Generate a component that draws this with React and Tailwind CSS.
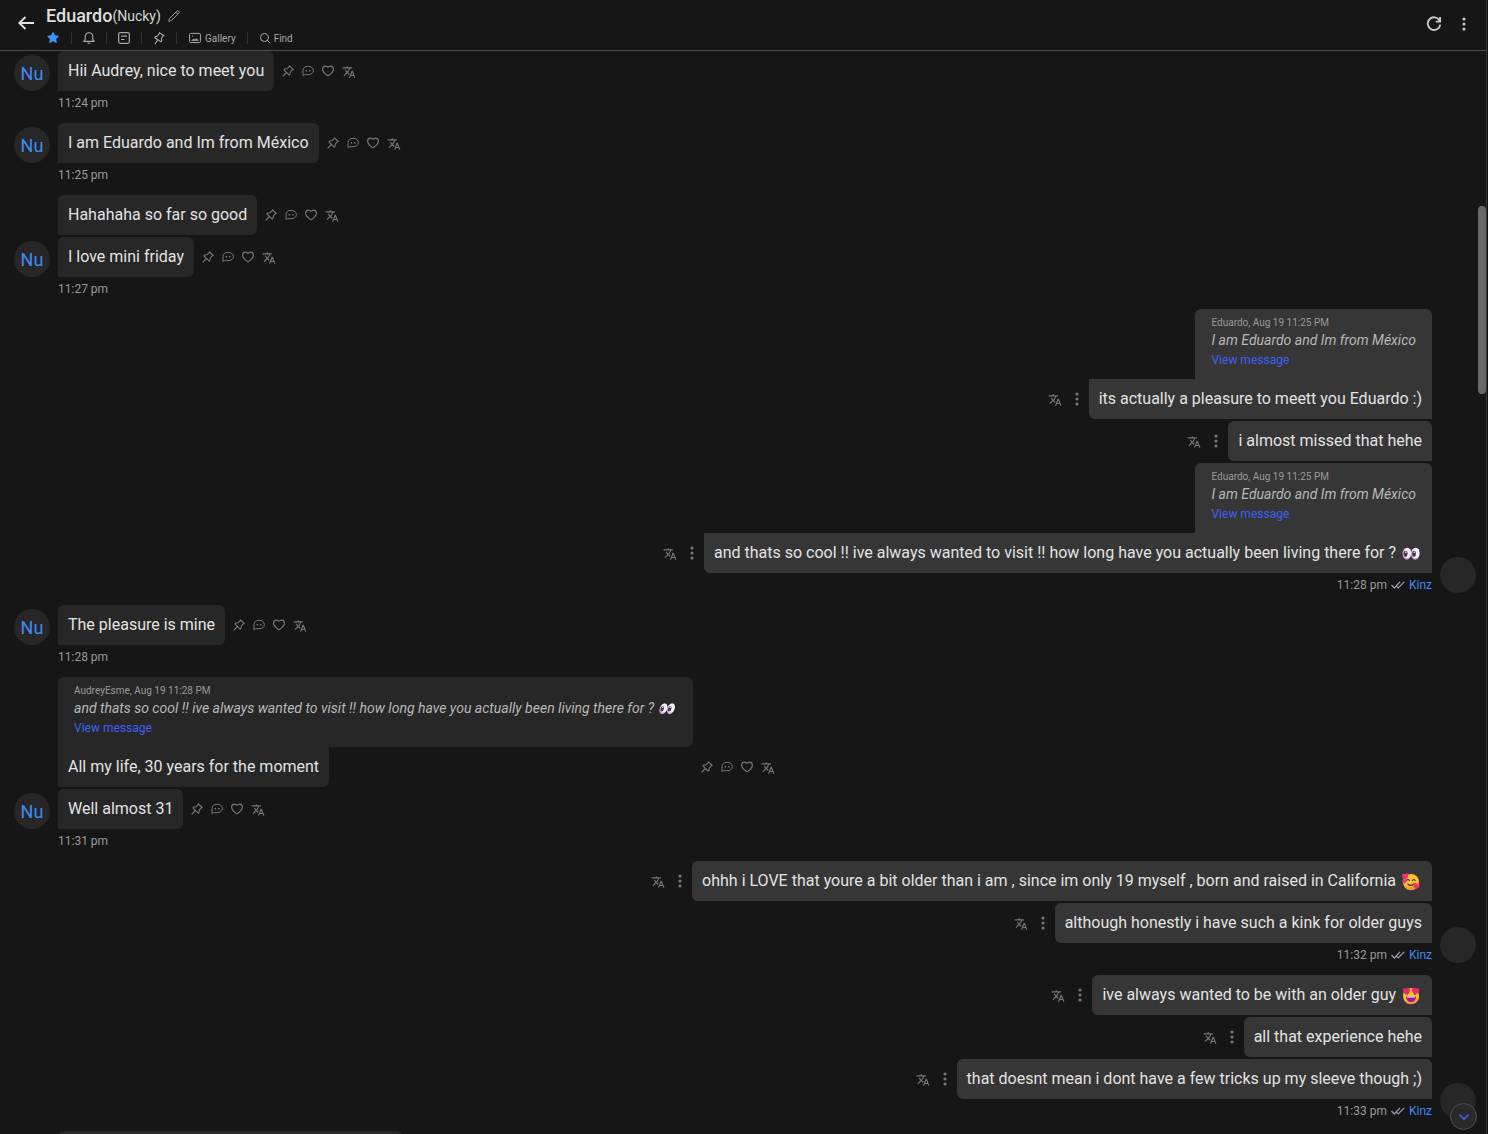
import { AiFillStar } from 'react-icons/ai'
import { MdTranslate } from 'react-icons/md'
import { ChevronDown, Search } from 'lucide-react'
import clsx from 'clsx'

const QUOTE_ME = {
  head: 'Eduardo, Aug 19 11:25 PM',
  text: 'I am Eduardo and Im from México',
}

// Each group shares one avatar and one timestamp
const GROUPS = [
  { from: 'them', time: '11:24 pm', messages: [{ text: 'Hii Audrey, nice to meet you' }] },
  { from: 'them', time: '11:25 pm', messages: [{ text: 'I am Eduardo and Im from México' }] },
  {
    from: 'them',
    time: '11:27 pm',
    messages: [{ text: 'Hahahaha so far so good' }, { text: 'I love mini friday' }],
  },
  {
    from: 'us',
    time: '11:28 pm',
    messages: [
      { quote: QUOTE_ME, text: 'its actually a pleasure to meett you Eduardo :)' },
      { text: 'i almost missed that hehe' },
      {
        quote: QUOTE_ME,
        text: 'and thats so cool !! ive always wanted to visit !! how long have you actually been living there for ?',
        emoji: 'eyes',
      },
    ],
  },
  { from: 'them', time: '11:28 pm', messages: [{ text: 'The pleasure is mine' }] },
  {
    from: 'them',
    time: '11:31 pm',
    messages: [
      {
        quote: {
          head: 'AudreyEsme, Aug 19 11:28 PM',
          text: 'and thats so cool !! ive always wanted to visit !! how long have you actually been living there for ?',
          emoji: 'eyes',
        },
        text: 'All my life, 30 years for the moment',
      },
      { text: 'Well almost 31' },
    ],
  },
  {
    from: 'us',
    time: '11:32 pm',
    messages: [
      {
        text: 'ohhh i LOVE that youre a bit older than i am , since im only 19 myself , born and raised in California',
        emoji: 'hearts',
      },
      { text: 'although honestly i have such a kink for older guys' },
    ],
  },
  {
    from: 'us',
    time: '11:33 pm',
    messages: [
      { text: 'ive always wanted to be with an older guy', emoji: 'loveEyes' },
      { text: 'all that experience hehe' },
      { text: 'that doesnt mean i dont have a few tricks up my sleeve though ;)' },
    ],
  },
]

const HEART = 'M0 3.2C-4.4 0-3.4-3.2-1.6-3.2-.6-3.2 0-2.2 0-2.2S.6-3.2 1.6-3.2C3.4-3.2 4.4 0 0 3.2Z'

function Emoji({ name, small }) {
  return (
    <span className={clsx('inline-flex justify-center align-middle', small ? 'w-[19px]' : 'w-[22px]')}>
      <svg
        viewBox="0 0 18 18"
        role="img"
        aria-label={name}
        className={small ? 'size-4 -skew-x-12' : 'size-[18px]'}
      >
        {name === 'eyes' && (
          <>
            <ellipse cx="4.8" cy="8.8" rx="4.300" ry="6" fill="#b79ad0" />
            <ellipse cx="13.200" cy="8.800" rx="4.300" ry="6" fill="#c8aedb" />
            <ellipse cx="5.400" cy="8" rx="3.700" ry="5.200" fill="#f3edf6" />
            <ellipse cx="13.800" cy="8" rx="3.700" ry="5.200" fill="#f6f1f8" />
            <ellipse cx="3.600" cy="8.800" rx="1.900" ry="3" fill="#493454" />
            <ellipse cx="12" cy="8.800" rx="1.900" ry="3" fill="#493454" />
            <circle cx="3.800" cy="7.200" r=".8" fill="#e8dff0" />
            <circle cx="12.200" cy="7.200" r=".8" fill="#e8dff0" />
          </>
        )}
        {name !== 'eyes' && <circle cx="9" cy="9" r="8" fill="#fdc02f" />}
        {name !== 'eyes' && <path d="M17 9a8 8 0 0 1-15 4c5 2.500 12 1 15-4Z" fill="#f7943d" />}
        {name === 'hearts' && (
          <>
            <path d="M4.600 7.500q1.400-2 2.800 0M10.400 7.500q1.400-2 2.800 0M5.800 11q3 2.800 6 0" fill="none" stroke="#4b2a1e" strokeWidth="1.100" strokeLinecap="round" />
            <path d={HEART} transform="translate(3.500 3.600) rotate(-12)" fill="#f0326e" />
            <path d={HEART} transform="translate(2.600 8.500) scale(.7)" fill="#f0326e" />
            <path d={HEART} transform="translate(14.400 13.300) rotate(10)" fill="#f0326e" />
          </>
        )}
        {name === 'loveEyes' && (
          <>
            <path d={HEART} transform="translate(4.600 4.500) rotate(-8) scale(1.150)" fill="#e8286b" />
            <path d={HEART} transform="translate(13.400 4.500) rotate(8) scale(1.150)" fill="#e8286b" />
            <path d="M4 9.500h10c0 3.500-2 5.500-5 5.500s-5-2-5-5.500Z" fill="#a2188a" />
            <path d="M5 9.500h8v1H5Z" fill="#fff" />
          </>
        )}
      </svg>
    </span>
  )
}

function PinIcon({ className }) {
  return (
    <svg viewBox="0 0 12 12" fill="none" stroke="currentColor" strokeWidth="1.100" strokeLinejoin="round" className={clsx('size-3', className)}>
      <path d="M7.500.8 11.200 4.500 10.200 4.900 8.300 7 8 9.300 7.200 10.100 1.900 4.800 2.700 4 5 3.700 7.100 1.800ZM4.400 7.500.700 11.300" />
    </svg>
  )
}

function BellIcon() {
  return (
    <svg viewBox="0 0 12 12" fill="none" stroke="currentColor" strokeWidth="1.100" strokeLinejoin="round" className="size-3">
      <path d="M.800 9.400 2.200 7.700V4.800C2.200 2.500 3.800.8 6 .8S9.800 2.500 9.800 4.800V7.700L11.200 9.400ZM4.500 11.300h3" />
    </svg>
  )
}

function ChatIcon() {
  return (
    <svg viewBox="0 0 12 12" fill="none" stroke="currentColor" className="size-3">
      <path d="M1 10.700V5.700C1 2.900 3.100 1.300 6.100 1.300S11.400 3.200 11.400 5.600 9.200 9.700 6.100 9.700H2.300L1 10.700Z" />
      <path d="M3.700 5.700h1.400M7.100 5.700h1.400" strokeWidth="1.500" />
    </svg>
  )
}

function HeartIcon() {
  return (
    <svg viewBox="0 0 12 12" fill="none" stroke="currentColor" strokeWidth="1.100" strokeLinejoin="round" className="size-3">
      <path d="M6 10.900C3.300 9 .600 6.700.600 4.200.600 2.400 1.900 1.100 3.500 1.100 4.600 1.100 5.500 1.700 6 2.500 6.500 1.700 7.400 1.100 8.500 1.100 10.100 1.100 11.400 2.400 11.400 4.200 11.400 6.700 8.700 9 6 10.900Z" />
    </svg>
  )
}

function DotsIcon({ className }) {
  return (
    <svg viewBox="0 0 4 14" fill="currentColor" className={className}>
      <circle cx="2" cy="2" r="1.600" />
      <circle cx="2" cy="7" r="1.600" />
      <circle cx="2" cy="12" r="1.600" />
    </svg>
  )
}

function ToolDivider() {
  return <span className="h-3 w-px bg-[#333]" />
}

function Header() {
  return (
    <header className="flex h-[51px] shrink-0 items-center border-b border-[#4a4a4a] pr-[22px] pl-[18px] text-[#c8c8c8]">
      <button type="button" aria-label="Back" className="-mt-1 text-[#e6e6e6]">
        <svg viewBox="0 0 16 14" fill="none" stroke="currentColor" strokeWidth="1.800" className="h-3.5 w-4">
          <path d="M7.500 1 1.300 7l6.200 6M1.500 7H16" />
        </svg>
      </button>
      <div className="ml-3 flex-1 pt-0.5">
        <div className="flex h-6 items-center">
          <h1 className="text-lg font-medium text-[#dedede]">Eduardo</h1>
          <span className="text-sm text-[#d6d6d6]">(Nucky)</span>
          <button type="button" aria-label="Edit name" className="ml-[7px] text-[#999]">
            <svg viewBox="0 0 12 12" fill="none" stroke="currentColor" strokeLinejoin="round" className="size-3">
              <path d="M.700 11.300 1.500 8.500 9.200.900c.4-.4.8-.4 1.200 0l.7.7c.4.4.4.800 0 1.200L3.500 10.500.700 11.300ZM8 2.200l1.800 1.800" />
            </svg>
          </button>
        </div>
        <div className="flex h-[21px] items-center gap-[11px] text-[10px] text-[#a8a8a8]">
          <button type="button" aria-label="Favourite" className="text-[#3c94ff]"><AiFillStar size={14} /></button>
          <ToolDivider />
          <button type="button" aria-label="Notifications"><BellIcon /></button>
          <ToolDivider />
          <button type="button" aria-label="Notes">
            <svg viewBox="0 0 12 12" fill="none" stroke="currentColor" strokeWidth="1.200" className="size-3">
              <rect x=".7" y=".7" width="10.600" height="10.600" rx="1.500" />
              <path d="M3 4.200h6M3 7.500h3.500" />
            </svg>
          </button>
          <ToolDivider />
          <button type="button" aria-label="Pinned"><PinIcon className="-rotate-12" /></button>
          <ToolDivider />
          <button type="button" className="ml-px flex items-center gap-1">
            <svg viewBox="0 0 12 12" fill="none" stroke="currentColor" className="size-3">
              <rect x=".6" y="1.400" width="10.800" height="9.200" rx="1" />
              <path d="M2.500 8.700h7L7.500 6.300 6 7.700 4.600 6.800Z" fill="currentColor" strokeWidth=".3" />
              <path d="M3 4h1" />
            </svg>
            Gallery
          </button>
          <ToolDivider />
          <button type="button" className="flex items-center gap-[3px]">
            <Search size={12} />
            Find
          </button>
        </div>
      </div>
      <button type="button" aria-label="Refresh" className="-mt-0.5 text-[#c8c8c8]">
        <svg viewBox="0 0 16 16" fill="none" stroke="currentColor" strokeWidth="1.900" className="size-4">
          <path d="M13.600 4.600A6.300 6.300 0 1 0 14.300 8.600M14.100 1v4.600H9.800" />
        </svg>
      </button>
      <button type="button" aria-label="More" className="-mt-0.5 ml-5">
        <DotsIcon className="h-3.5 w-1" />
      </button>
    </header>
  )
}

function Actions({ mine }) {
  if (mine) {
    return (
      <div className="mr-2.5 flex h-10 items-center gap-[13px] self-end text-[#777]">
        <button type="button" aria-label="Translate" className="mt-0.5"><MdTranslate size={14} /></button>
        <button type="button" aria-label="More"><DotsIcon className="h-3.5 w-1" /></button>
      </div>
    )
  }
  return (
    <div className="ml-2 flex h-10 items-center gap-2 self-end text-[#777]">
      <button type="button" aria-label="Pin"><PinIcon /></button>
      <button type="button" aria-label="Reply"><ChatIcon /></button>
      <button type="button" aria-label="Like"><HeartIcon /></button>
      <button type="button" aria-label="Translate" className="mt-0.5"><MdTranslate size={14} /></button>
    </div>
  )
}

function Message({ message, mine }) {
  const { quote, text, emoji } = message
  return (
    <div className={clsx('mb-0.5 flex', mine && 'justify-end')}>
      {mine && <Actions mine />}
      <div className={clsx('flex flex-col', mine ? 'items-end' : 'items-start')}>
        {quote && (
          <div
            className={clsx(
              'h-[70px] px-4 pt-2',
              mine ? 'rounded-t-md bg-[#363636]' : 'rounded-t-md rounded-br-md bg-[#272727]'
            )}
          >
            <div className="text-[10px] leading-3 text-[#999]">{quote.head}</div>
            <div className="text-sm leading-[22px] text-[#b8b8b8] [font-style:oblique_10deg]">
              {quote.text}
              {quote.emoji && <> <Emoji name={quote.emoji} small /></>}
            </div>
            <a href="#message" className="block text-xs leading-[18px] text-[#4060f5]">View message</a>
          </div>
        )}
        <div
          className={clsx(
            'h-10 px-2.5 text-base leading-10 text-[#e2e2e2]',
            mine ? 'rounded-bl-md bg-[#363636]' : 'rounded-br-md bg-[#272727]',
            !quote && 'rounded-t-md'
          )}
        >
          {text}
          {emoji && <> <Emoji name={emoji} /></>}
        </div>
      </div>
      {!mine && <Actions />}
    </div>
  )
}

function Group({ group }) {
  const mine = group.from === 'us'
  return (
    <section className={clsx('mb-2.5 flex items-end gap-2', mine && 'flex-row-reverse')}>
      {mine ? (
        <div className="mb-0.5 size-9 shrink-0 rounded-full bg-[#272727]" />
      ) : (
        <div className="mb-[22px] size-9 shrink-0 rounded-full bg-[#272727] text-center text-lg leading-[38px] text-[#3c8cf5]">
          Nu
        </div>
      )}
      <div className="flex-1">
        {group.messages.map((message) => (
          <Message key={message.text} message={message} mine={mine} />
        ))}
        <div className={clsx('flex h-5 items-center text-xs text-[#999]', mine && 'justify-end')}>
          {group.time}
          {mine && (
            <>
              <svg viewBox="0 0 14 8" fill="none" stroke="#999cab" strokeWidth="1.200" className="mx-1 h-2 w-3.5">
                <path d="M.500 4l2.800 3L9 .8M5.500 5.300 7.200 7 13.300.8" />
              </svg>
              <span className="text-[#3c8cf5]">Kinz</span>
            </>
          )}
        </div>
      </div>
    </section>
  )
}

export default function App() {
  return (
    <div className="relative flex h-screen flex-col overflow-hidden bg-[#161616] font-[Roboto,sans-serif]">
      <Header />
      <main className="min-h-0 flex-1 overflow-hidden pr-3 pl-3.5">
        {GROUPS.map((group, i) => (
          <Group key={i} group={group} />
        ))}
        {/* next message, still below the fold */}
        <div className="ml-11 h-10 w-[344px] rounded-t-md rounded-br-md bg-[#272727]" />
      </main>

      {/* Scrollbar */}
      <div className="absolute inset-y-0 right-0 w-2.5 border-r border-[#111]">
        <div className="absolute inset-y-0 right-0 w-px bg-[#3c3c3c]" />
        <div className="absolute top-[206px] left-0 h-[188px] w-2 rounded-full bg-[#686868]" />
      </div>

      <button
        type="button"
        aria-label="Scroll to latest"
        className="absolute right-[11px] bottom-1 flex size-[27px] items-center justify-center rounded-full border border-[#505050] bg-[#2a2a2a] text-[#4060f5]"
      >
        <ChevronDown size={16} strokeWidth={2.5} />
      </button>
    </div>
  )
}
